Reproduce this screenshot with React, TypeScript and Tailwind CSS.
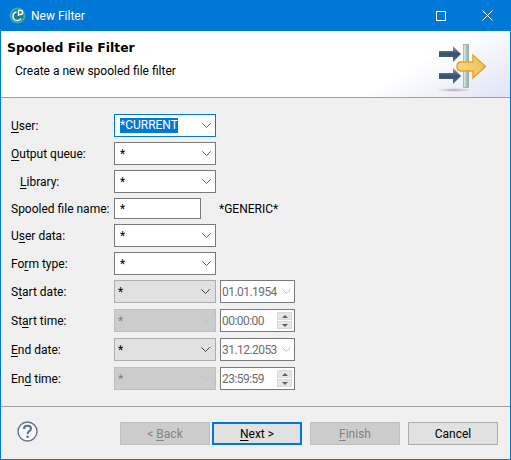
import React from 'react';

// Chevron used by combos and date pickers
const Chevron = ({ color = '#606060' }: { color?: string }) => (
  <svg width="9" height="5" viewBox="0 0 9 5" fill="none" stroke={color} strokeWidth="1">
    <path d="M0.3 0.3 L4.5 4.5 L8.7 0.3" />
  </svg>
);

// Native combo look, three states
const Combo = ({
  value,
  state = 'normal',
  selected = false,
}: {
  value: string;
  state?: 'normal' | 'readonly' | 'disabled';
  selected?: boolean;
}) => {
  const box =
    state === 'normal'
      ? selected
        ? 'bg-white border-[#0078d7] pl-[5px] pr-[4px]'
        : 'bg-white border-[#7a7a7a] pl-[5px] pr-[4px]'
      : state === 'readonly'
        ? 'bg-[#e1e1e1] border-[#adadad] pl-[3px] pr-[5px]'
        : 'bg-[#cccccc] border-[#bfbfbf] pl-[3px] pr-[5px]';
  return (
    <div className={`w-[102px] h-[23px] border flex items-center justify-between ${box}`}>
      {selected ? (
        <span className="bg-[#0078d7] text-white h-[15px] leading-[15px]">{value}</span>
      ) : (
        <span className={state === 'disabled' ? 'text-[#838383]' : 'text-black'}>{value}</span>
      )}
      <Chevron color={state === 'disabled' ? '#bfbfbf' : state === 'readonly' ? '#404040' : '#606060'} />
    </div>
  );
};

const DateBox = ({ value }: { value: string }) => (
  <div className="w-[75px] h-[23px] border border-[#7a7a7a] bg-white flex items-center justify-between pl-[1px] pr-[3px] text-[#6d6d6d]">
    <span className="tracking-[-0.55px]">{value}</span>
    <Chevron color="#bfbfbf" />
  </div>
);

const TimeBox = ({ value }: { value: string }) => (
  <div className="w-[75px] h-[23px] border border-[#7a7a7a] bg-white flex items-center justify-between pl-[1px] pr-[2px] text-[#6d6d6d]">
    <span className="tracking-[-0.55px]">{value}</span>
    <div className="flex flex-col w-[15px] h-[17px] gap-px">
      <div className="flex-1 bg-[#e6e6e6] border border-[#dadada] flex items-center justify-center">
        <div className="w-0 h-0 border-x-[3px] border-x-transparent border-b-[3px] border-b-[#606060]" />
      </div>
      <div className="flex-1 bg-[#e6e6e6] border border-[#dadada] flex items-center justify-center">
        <div className="w-0 h-0 border-x-[3px] border-x-transparent border-t-[3px] border-t-[#606060]" />
      </div>
    </div>
  </div>
);

// Label with a mnemonic underline
const Label = ({ pre = '', mn, post, indent = false }: { pre?: string; mn: string; post: string; indent?: boolean }) => (
  <div className={`w-[103px] shrink-0 whitespace-nowrap text-black ${indent ? 'pl-[9px]' : ''}`}>
    {pre}
    <span className="underline underline-offset-2">{mn}</span>
    {post}
  </div>
);

const Row = ({ children, className = '' }: { children: React.ReactNode; className?: string }) => (
  <div className={`flex items-center ${className}`}>{children}</div>
);

const WizardButton = ({
  children,
  kind = 'normal',
}: {
  children: React.ReactNode;
  kind?: 'normal' | 'default' | 'disabled';
}) => {
  const cls =
    kind === 'default'
      ? 'bg-[#e1e1e1] border-2 border-[#0078d7] text-black'
      : kind === 'disabled'
        ? 'bg-[#cccccc] border border-[#bfbfbf] text-[#838383]'
        : 'bg-[#e1e1e1] border border-[#adadad] text-black';
  return <div className={`w-[90px] h-[23px] flex items-center justify-center ${cls}`}>{children}</div>;
};

const BannerIcon = () => (
  <svg width="52" height="52" viewBox="0 0 52 52" className="shrink-0">
    <defs>
      <linearGradient id="dark" x1="0" y1="0" x2="0" y2="1">
        <stop offset="0" stopColor="#8ea3b8" />
        <stop offset="0.5" stopColor="#34506e" />
        <stop offset="1" stopColor="#5d7288" />
      </linearGradient>
      <linearGradient id="gold" x1="0" y1="0" x2="1" y2="0">
        <stop offset="0" stopColor="#f9d77e" />
        <stop offset="1" stopColor="#f2c05a" />
      </linearGradient>
      <linearGradient id="bar" x1="0" y1="0" x2="1" y2="0">
        <stop offset="0" stopColor="#e8f0e8" />
        <stop offset="1" stopColor="#8aa6a0" />
      </linearGradient>
      <radialGradient id="shadow">
        <stop offset="0" stopColor="#b5a8b0" />
        <stop offset="1" stopColor="#b5a8b0" stopOpacity="0" />
      </radialGradient>
    </defs>
    <ellipse cx="18" cy="49" rx="18" ry="2" fill="url(#shadow)" />
    <rect x="27.5" y="3.5" width="5" height="18" fill="url(#bar)" stroke="#7f9a94" strokeWidth="0.6" />
    <rect x="27.5" y="28.5" width="5" height="18" fill="url(#bar)" stroke="#7f9a94" strokeWidth="0.6" />
    <path d="M3 10 H17 V5 L25 13 L17 21 V16 H3 Z" fill="url(#dark)" />
    <path d="M3 32 H17 V27 L25 35 L17 43 V38 H3 Z" fill="url(#dark)" />
    <path
      d="M25 21 H37 V14 L49.5 25.5 L37 37 V30 H25 Q21 30 21 25.5 Q21 21 25 21 Z"
      fill="url(#gold)"
      stroke="#e9a21c"
      strokeWidth="1.4"
    />
  </svg>
);

const AppIcon = () => (
  <svg width="17" height="17" viewBox="0 0 17 17">
    <circle cx="8.5" cy="8.5" r="8" fill="#3aa6b5" />
    <circle cx="8.5" cy="8.5" r="6" fill="#1b7f92" />
    <path d="M9 3.5 H12 Q13.5 3.5 13.5 5.5 Q13.5 7.5 12 7.5 H10 M9.5 3.5 V9" fill="none" stroke="#ffffff" strokeWidth="1.4" />
    <path d="M7.5 5 Q3.5 6 4 10 Q4.5 13.5 8.5 13.5 Q11 13.5 12 11.5" fill="none" stroke="#ffffff" strokeWidth="1.4" />
  </svg>
);

const HelpIcon = () => (
  <svg width="21" height="21" viewBox="0 0 21 21">
    <circle cx="10.5" cy="10.5" r="9.5" fill="#f7f8fa" stroke="#65748a" strokeWidth="1.4" />
    <path
      d="M7 8 Q7 4.8 10.5 4.8 Q14 4.8 14 7.6 Q14 9.4 12 10.4 Q10.6 11.2 10.6 13"
      fill="none"
      stroke="#5d6d84"
      strokeWidth="2"
    />
    <circle cx="10.6" cy="15.8" r="1.3" fill="#5d6d84" />
  </svg>
);

export default function App() {
  return (
    <div className="w-[511px] h-[460px] flex flex-col border-x border-b border-[#0078d7] bg-[#f0f0f0] text-[12px] leading-[16px] font-['Roboto',sans-serif] overflow-hidden">
      <div className="h-[31px] shrink-0 bg-[#0078d7] flex items-center text-white pl-[8px]">
        <AppIcon />
        <span className="ml-[5px] text-[12px]">New Filter</span>
        <div className="ml-auto flex items-center">
          <div className="w-[10px] h-[10px] border border-white mr-[36px]" />
          <svg width="11" height="11" viewBox="0 0 11 11" stroke="#ffffff" strokeWidth="1" className="mr-[17px]">
            <path d="M0.5 0.5 L10.5 10.5 M10.5 0.5 L0.5 10.5" />
          </svg>
        </div>
      </div>

      <div className="h-[67px] shrink-0 bg-[linear-gradient(150deg,#ffffff_0%,#ffffff_76%,#dfe4f5_100%)] border-b border-[#a0a0a0] flex justify-between pl-[6px] pr-[22px]">
        <div>
          <div className="mt-[9px] font-['DejaVu_Sans',sans-serif] font-bold text-[12.4px] leading-[16px] text-black">Spooled File Filter</div>
          <div className="mt-[7px] pl-[8px] text-black">Create a new spooled file filter</div>
        </div>
        <div className="mt-[10px]">
          <BannerIcon />
        </div>
      </div>

      <div className="flex-1 flex flex-col pl-[10px] pt-[16px]">
        <Row>
          <Label mn="U" post="ser:" />
          <Combo value="*CURRENT" selected />
        </Row>
        <Row className="mt-[5px]">
          <Label mn="O" post="utput queue:" />
          <Combo value="*" />
        </Row>
        <Row className="mt-[5px]">
          <Label mn="L" post="ibrary:" indent />
          <Combo value="*" />
        </Row>
        <Row className="mt-[5px]">
          <Label mn="" post="Spooled file name:" />
          <div className="w-[87px] h-[21px] border border-[#7a7a7a] bg-white pl-[5px] flex items-center">*</div>
          <div className="ml-[18px]">*GENERIC*</div>
        </Row>
        <Row className="mt-[5px]">
          <Label pre="U" mn="s" post="er data:" />
          <Combo value="*" />
        </Row>
        <Row className="mt-[5px]">
          <Label pre="Fo" mn="r" post="m type:" />
          <Combo value="*" />
        </Row>
        <Row className="mt-[5px] gap-[4px]">
          <div className="flex items-center">
            <Label pre="S" mn="t" post="art date:" />
            <Combo value="*" state="readonly" />
          </div>
          <DateBox value="01.01.1954" />
        </Row>
        <Row className="mt-[6px] gap-[4px]">
          <div className="flex items-center">
            <Label pre="St" mn="a" post="rt time:" />
            <Combo value="*" state="disabled" />
          </div>
          <TimeBox value="00:00:00" />
        </Row>
        <Row className="mt-[6px] gap-[4px]">
          <div className="flex items-center">
            <Label mn="E" post="nd date:" />
            <Combo value="*" state="readonly" />
          </div>
          <DateBox value="31.12.2053" />
        </Row>
        <Row className="mt-[6px] gap-[4px]">
          <div className="flex items-center">
            <Label pre="En" mn="d" post=" time:" />
            <Combo value="*" state="disabled" />
          </div>
          <TimeBox value="23:59:59" />
        </Row>
      </div>

      <div className="h-[53px] shrink-0 border-t border-[#a0a0a0] flex items-start pt-[15px] pl-[16px] pr-[12px]">
        <div className="mt-[-1px]">
          <HelpIcon />
        </div>
        <div className="ml-auto flex">
          <WizardButton kind="disabled">
            <span>&lt; <span className="underline underline-offset-2">B</span>ack</span>
          </WizardButton>
          <div className="ml-[2px]">
            <WizardButton kind="default">
              <span><span className="underline underline-offset-2">N</span>ext &gt;</span>
            </WizardButton>
          </div>
          <div className="ml-[8px]">
            <WizardButton kind="disabled">
              <span><span className="underline underline-offset-2">F</span>inish</span>
            </WizardButton>
          </div>
          <div className="ml-[8px]">
            <WizardButton>Cancel</WizardButton>
          </div>
        </div>
      </div>
    </div>
  );
}
